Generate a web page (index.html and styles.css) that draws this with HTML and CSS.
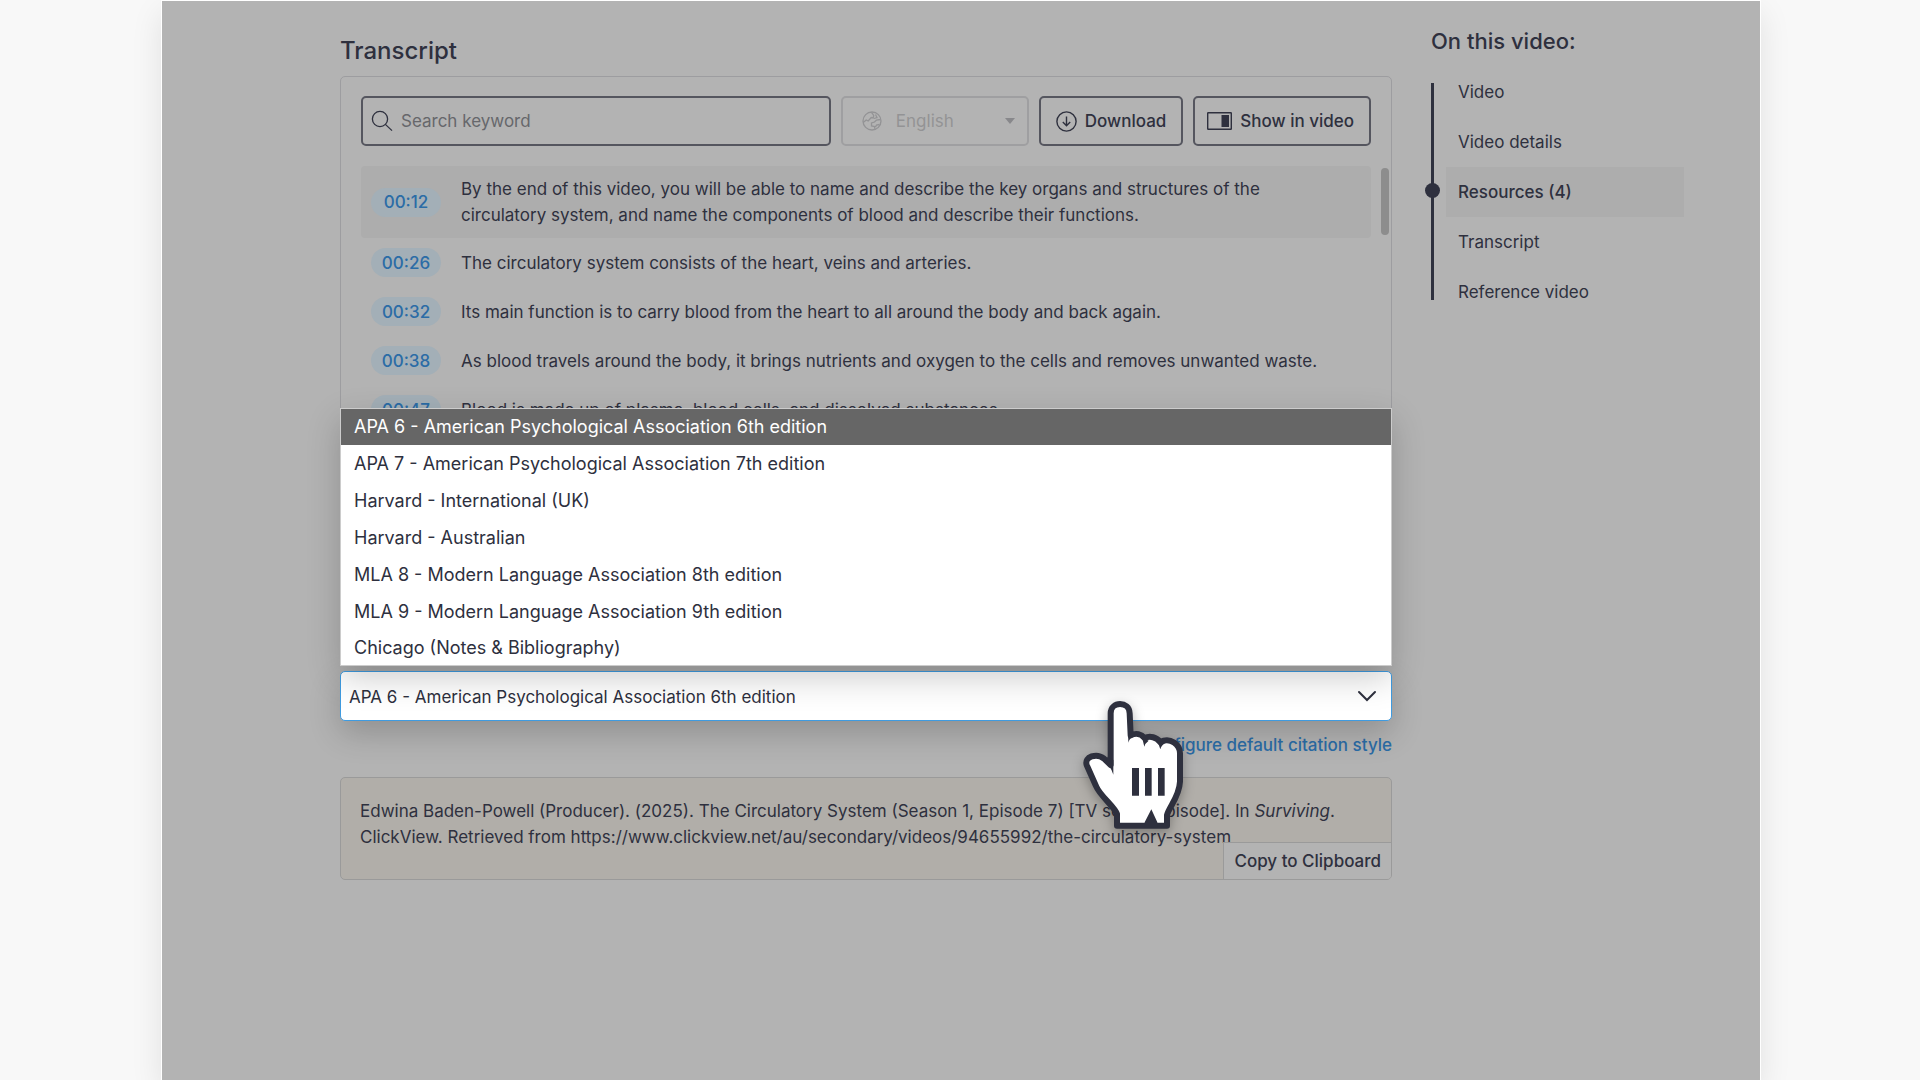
FILE: index.html
```html
<!DOCTYPE html>
<html lang="en">
<head>
    <meta charset="UTF-8">
    <meta name="viewport" content="width=device-width, initial-scale=1.0">
    <title>The Circulatory System</title>
    <link rel="stylesheet" href="styles.css">
</head>
<body>
    <div class="page">
        <main class="content">
            <h2 class="title">Transcript</h2>

            <section class="transcript">
                <div class="toolbar">
                    <label class="search">
                        <svg width="22" height="22" viewBox="0 0 22 22" fill="none" stroke="currentColor" stroke-width="1.3">
                            <circle cx="9" cy="9" r="7.6"/>
                            <path d="M14.4 14.4L21 20.6"/>
                        </svg>
                        <input type="text" placeholder="Search keyword" aria-label="Search keyword">
                    </label>
                    <div class="language">
                        <svg width="20" height="20" viewBox="0 0 20 20" fill="none" stroke="currentColor" stroke-width="1.3">
                            <circle cx="10" cy="10" r="9"/>
                            <path d="M1.2 11.5l3-2.5 2 1 3-3.5 2 .5.5-2.5L9.5 1.3M12 7.5l3-1-1.5-3M18.5 8.5l-4 .5-2 2-3 1v3l3 .5.5 3M17.5 13.5l-3 .5-1 2"/>
                        </svg>
                        <select aria-label="Language" disabled>
                            <option>English</option>
                        </select>
                        <span class="caret"></span>
                    </div>
                    <button class="btn" type="button">
                        <svg width="21" height="21" viewBox="0 0 21 21" fill="none" stroke="currentColor" stroke-width="1.4">
                            <circle cx="10.5" cy="10.5" r="9.6"/>
                            <path d="M10.5 5.5v9M6.8 11l3.7 3.7 3.7-3.7"/>
                        </svg>
                        Download
                    </button>
                    <button class="btn" type="button">
                        <svg width="25" height="18" viewBox="0 0 25 18" fill="none" stroke="currentColor" stroke-width="1.4">
                            <rect x=".7" y=".7" width="23.6" height="16.6" rx=".5"/>
                            <rect x="14.5" y="3" width="7.5" height="12" fill="currentColor" stroke="none"/>
                        </svg>
                        Show in video
                    </button>
                </div>

                <div class="lines">
                    <div class="line active">
                        <button class="time" type="button">00:12</button>
                        <p>By the end of this video, you will be able to name and describe the key organs and structures of the circulatory system, and name the components of blood and describe their functions.</p>
                    </div>
                    <div class="line">
                        <button class="time" type="button">00:26</button>
                        <p>The circulatory system consists of the heart, veins and arteries.</p>
                    </div>
                    <div class="line">
                        <button class="time" type="button">00:32</button>
                        <p>Its main function is to carry blood from the heart to all around the body and back again.</p>
                    </div>
                    <div class="line">
                        <button class="time" type="button">00:38</button>
                        <p>As blood travels around the body, it brings nutrients and oxygen to the cells and removes unwanted waste.</p>
                    </div>
                    <div class="line">
                        <button class="time" type="button">00:47</button>
                        <p>Blood is made up of plasma, blood cells, and dissolved substances.</p>
                    </div>
                    <span class="scrollbar"></span>
                </div>
            </section>

            <section class="reference">
                <div class="style-picker">
                    <select class="style-select" aria-label="Citation style">
                        <option>APA 6 - American Psychological Association 6th edition</option>
                    </select>
                    <svg class="chevron" width="20" height="12" viewBox="0 0 20 12" fill="none" stroke="currentColor" stroke-width="2" stroke-linecap="round">
                        <path d="M2 2l8 8 8-8"/>
                    </svg>
                    <ul class="menu" role="listbox" aria-label="Citation styles">
                        <li role="option" aria-selected="true" class="selected">APA 6 - American Psychological Association 6th edition</li>
                        <li role="option">APA 7 - American Psychological Association 7th edition</li>
                        <li role="option">Harvard - International (UK)</li>
                        <li role="option">Harvard - Australian</li>
                        <li role="option">MLA 8 - Modern Language Association 8th edition</li>
                        <li role="option">MLA 9 - Modern Language Association 9th edition</li>
                        <li role="option">Chicago (Notes &amp; Bibliography)</li>
                    </ul>
                    <svg class="pointer" width="100" height="128" viewBox="129 153 300 384">
                        <path fill="#fff" stroke="#2e303e" stroke-width="18" stroke-linejoin="round" d="M212 345V190C212 153 268 153 269 190L272 256C288 248 304 252 314 264C330 256 350 262 360 276C392 260 420 284 420 310V395C418 440 388 470 381 495V527H231V492C224 470 180 438 168 408L140 345C132 320 170 308 192 326Z"/>
                        <path fill="#2e303e" d="M203 320L220 330V374C214 356 206 343 198 334ZM264 240L278 262Q268 266 265 278ZM306 262L326 272Q315 280 313 290ZM352 272L378 278Q364 284 361 298ZM334 478L352 517V532H314V517ZM276 354H297V437H276ZM315 354H335V437H315ZM354 354H374V437H354Z"/>
                    </svg>
                </div>
                <a class="configure" href="#">Configure default citation style</a>
                <div class="citation">
                    <p>Edwina Baden-Powell (Producer). (2025). The Circulatory System (Season 1, Episode 7) [TV series episode]. In <em>Surviving</em>. ClickView. Retrieved from https://www.clickview.net/au/secondary/videos/94655992/the-circulatory-system</p>
                    <button class="copy" type="button">Copy to Clipboard</button>
                </div>
            </section>
        </main>

        <nav class="sidebar">
            <h3>On this video:</h3>
            <ul>
                <li><a href="#">Video</a></li>
                <li><a href="#">Video details</a></li>
                <li class="current"><a href="#">Resources (4)</a></li>
                <li><a href="#">Transcript</a></li>
                <li><a href="#">Reference video</a></li>
            </ul>
        </nav>
    </div>
</body>
</html>
```

FILE: styles.css
```css
* {
    box-sizing: border-box;
}

body {
    margin: 0;
    padding: 1px 160px 0 162px;
    background: #f8f8f8;
    color: #2e303e;
    font-family: Inter, "Liberation Sans", sans-serif;
    font-optical-sizing: none;
    font-size: 17px;
    line-height: 26px;
}

h2, h3, p, ul {
    margin: 0;
    padding: 0;
    font-weight: 500;
}

p {
    font-weight: 400;
}

ul {
    list-style: none;
}

button, input, select {
    font: inherit;
    font-optical-sizing: inherit;
    color: inherit;
    background: none;
    border: none;
}

svg {
    flex: none;
}

.page {
    display: flex;
    gap: 39px;
    min-height: calc(100vh - 1px);
    padding: 24px 76px 0 178px;
    background: #b3b3b3;
    box-shadow: 0 0 0 1px #fff, 0 12px 30px rgba(0, 0, 0, 0.1);
}

.content {
    flex: 1;
    min-width: 0;
}

.title {
    font-size: 24px;
    line-height: 51px;
}

/* transcript */

.transcript {
    border: 1px solid #9d9da0;
    border-radius: 5px;
    padding: 19px 2px 0 20px;
}

.toolbar {
    display: flex;
    gap: 10px;
    padding-right: 18px;
}

.search, .language, .btn {
    display: flex;
    align-items: center;
    height: 50px;
    border: 2px solid #55565f;
    border-radius: 5px;
}

.search {
    flex: 1;
    gap: 8px;
    padding: 0 10px 0 8px;
}

.search input {
    width: 100%;
    padding: 0;
    outline: none;
}

.search input::placeholder {
    color: #66676b;
    opacity: 1;
}

.language {
    position: relative;
    width: 188px;
    gap: 14px;
    padding: 0 12px 0 19px;
    border-color: #9f9fa1;
    color: #939395;
}

.language select {
    flex: 1;
    padding: 0;
    appearance: none;
    opacity: 1;
}

.caret {
    border: 5px solid transparent;
    border-top: 6px solid #88888b;
    border-bottom: 0;
}

.btn {
    gap: 8px;
    padding: 0 15px;
    font-weight: 500;
    white-space: nowrap;
}

.btn:last-child {
    padding-left: 12px;
}

.lines {
    position: relative;
    height: 484px;
    margin-top: 20px;
    padding-right: 18px;
    overflow: hidden;
}

.line {
    display: flex;
    align-items: center;
    gap: 20px;
    padding: 10px 30px 10px 10px;
    border-radius: 4px;
}

.line.active {
    background: #adadad;
}

.time {
    flex: none;
    width: 70px;
    height: 29px;
    padding: 0;
    border-radius: 15px;
    background: #a3afb7;
    color: #2b6ca6;
    font-weight: 500;
}

.scrollbar {
    position: absolute;
    top: 2px;
    right: 0;
    width: 8px;
    height: 67px;
    border-radius: 4px;
    background: #8d8d8d;
}

/* citation */

.reference {
    display: flex;
    flex-direction: column;
    margin-top: 20px;
}

.style-picker {
    position: relative;
    z-index: 1;
}

.style-select {
    display: block;
    width: 100%;
    height: 50px;
    padding: 1px 50px 0 8px;
    appearance: none;
    background: #fff;
    border: 1px solid #3f9be0;
    border-radius: 5px;
    box-shadow: 0 12px 32px rgba(0, 0, 0, 0.2);
}

.chevron {
    position: absolute;
    right: 15px;
    top: 19px;
}

.menu {
    position: absolute;
    left: 0;
    right: 0;
    bottom: 55px;
    background: #fff;
    border: 1px solid #ccc;
    box-shadow: 0 12px 32px rgba(0, 0, 0, 0.2);
}

.menu li {
    padding: 0 13px;
    font-size: 18px;
    font-weight: 400;
    line-height: 37px;
}

.menu .selected {
    background: #666;
    color: #fff;
    line-height: 36px;
}

.menu li:last-child {
    line-height: 35px;
}

.pointer {
    position: absolute;
    right: 209px;
    top: 30px;
    overflow: visible;
    filter: drop-shadow(0 4px 6px rgba(0, 0, 0, 0.3));
}

.configure {
    align-self: flex-end;
    margin: 11px 0 19px;
    color: #2b6ca6;
    font-weight: 500;
    text-decoration: none;
}

.citation {
    position: relative;
    min-height: 103px;
    padding: 20px 19px;
    background: #b1aea9;
    border: 1px solid #9a9a9a;
    border-radius: 5px;
}

.copy {
    position: absolute;
    right: 0;
    bottom: 0;
    height: 37px;
    padding: 0 10px;
    background: #b3b3b3;
    border: 1px solid #9a9a9a;
    border-width: 1px 0 0 1px;
    border-bottom-right-radius: 4px;
    font-weight: 500;
}

/* sidebar */

.sidebar {
    width: 253px;
}

.sidebar h3 {
    font-size: 22px;
    line-height: 32px;
}

.sidebar ul {
    position: relative;
    margin-top: 10px;
    padding-left: 15px;
}

.sidebar ul::before {
    content: "";
    position: absolute;
    left: 0;
    top: 16px;
    bottom: 17px;
    width: 3px;
    background: #2e303e;
}

.sidebar li {
    position: relative;
    padding-left: 12px;
    line-height: 50px;
    font-weight: 400;
}

.sidebar a {
    color: inherit;
    text-decoration: none;
}

.sidebar .current {
    background: #adadad;
    font-weight: 500;
}

.sidebar .current::before {
    content: "";
    position: absolute;
    left: -21px;
    top: 16px;
    width: 15px;
    height: 15px;
    border-radius: 50%;
    background: #2e303e;
}
```
